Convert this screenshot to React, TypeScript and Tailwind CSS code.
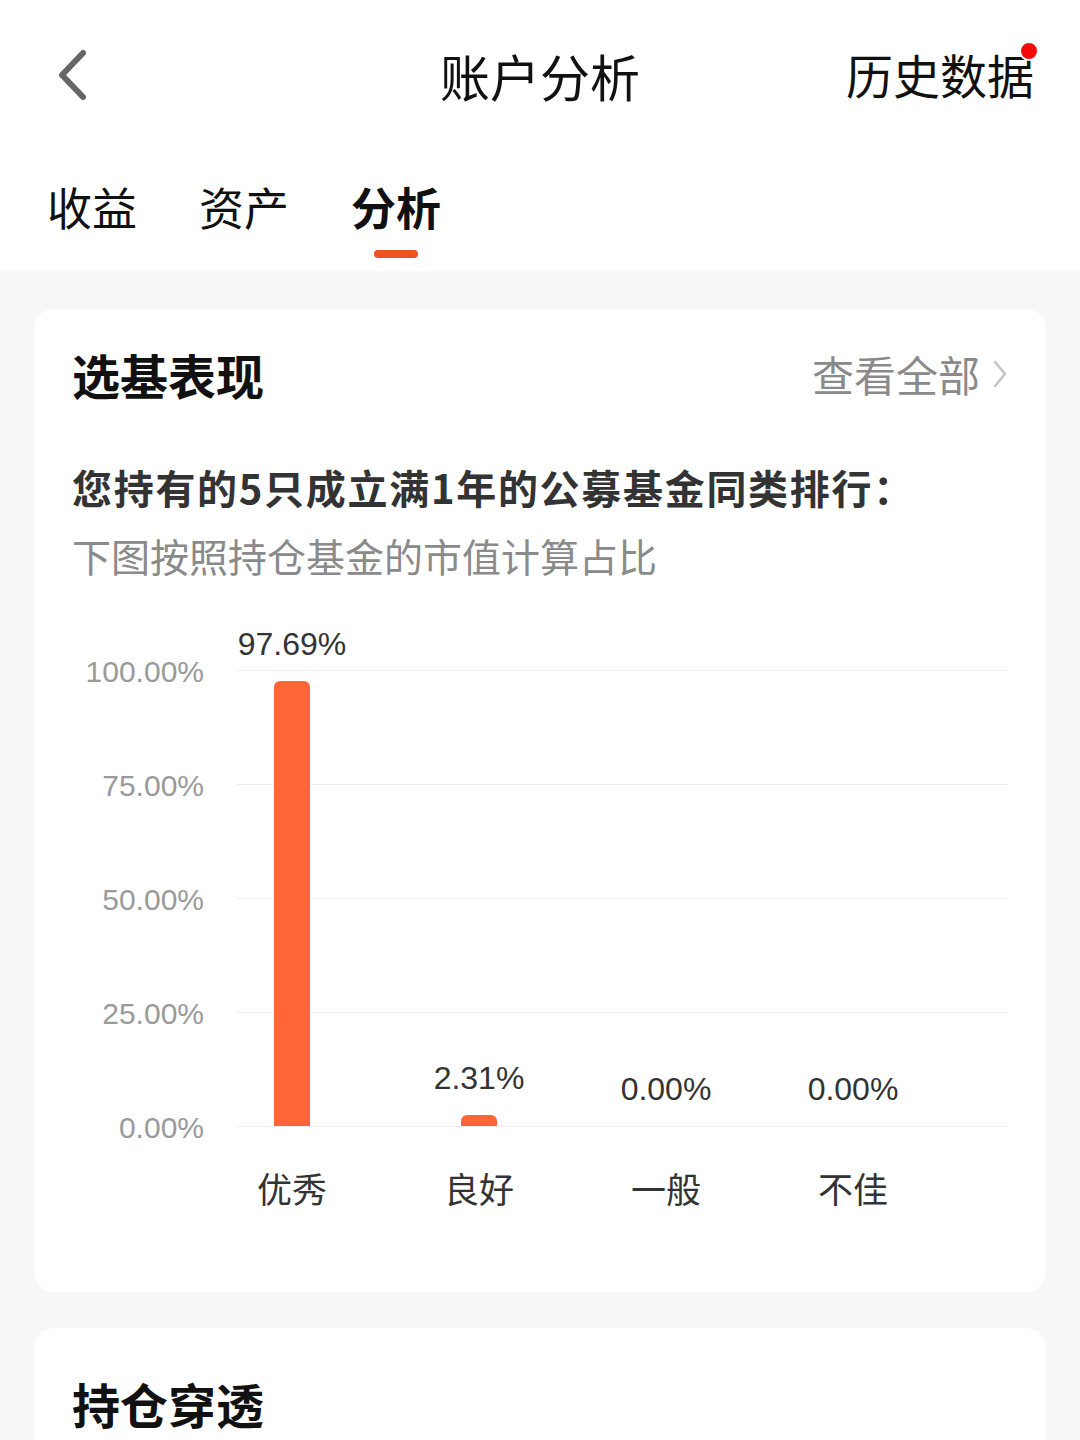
import React from "react";

const CJK = "font-['Noto_Sans_CJK_SC',sans-serif]";
const NUM = "font-['Liberation_Sans','Noto_Sans_CJK_SC',sans-serif]";

const TICKS = ["100.00%", "75.00%", "50.00%", "25.00%", "0.00%"];
const CHART_H = 456;

const bars = [
  { label: "优秀", value: 97.69, center: 220 },
  { label: "良好", value: 2.31, center: 407 },
  { label: "一般", value: 0, center: 594 },
  { label: "不佳", value: 0, center: 781 },
];

function BackIcon() {
  return (
    <svg width="32" height="52" viewBox="0 0 32 52" fill="none">
      <path d="M27 4 L6 26 L27 48" stroke="#666" strokeWidth="6" strokeLinecap="round" strokeLinejoin="round" />
    </svg>
  );
}

function Chevron() {
  return (
    <svg width="16" height="30" viewBox="0 0 16 30" fill="none">
      <path d="M3 3 L13 15 L3 27" stroke="#c4c4c4" strokeWidth="2.5" strokeLinecap="round" strokeLinejoin="round" />
    </svg>
  );
}

function Chart() {
  return (
    <div className="relative mt-[89px]" style={{ height: CHART_H }}>
      {TICKS.map((t, i) => {
        const top = (CHART_H / 4) * i;
        return (
          <React.Fragment key={t}>
            <div className="absolute left-[164px] right-0 h-px bg-[#efefef]" style={{ top }} />
            <div
              className={`absolute left-0 w-[132px] text-right text-[30px] leading-[36px] text-[#9a9a9a] ${NUM}`}
              style={{ top: top - 16 }}
            >
              {t}
            </div>
          </React.Fragment>
        );
      })}
      {bars.map((b) => {
        const h = Math.round((b.value / 100) * CHART_H);
        return (
          <React.Fragment key={b.label}>
            {h > 0 && (
              <div
                className="absolute bottom-0 w-[36px] rounded-t-[6px] bg-[#ff6536]"
                style={{ left: b.center - 18, height: h }}
              />
            )}
            <div
              className={`absolute w-[160px] text-center text-[32px] leading-[40px] text-[#333] ${NUM}`}
              style={{ left: b.center - 80, top: CHART_H - h - 37 - 20 }}
            >
              {b.value.toFixed(2)}%
            </div>
          </React.Fragment>
        );
      })}
    </div>
  );
}

export default function App() {
  return (
    <div className={`w-[1080px] min-h-[1440px] bg-[#f7f7f7] ${CJK}`}>
      <div className="bg-white">
        <div className="relative flex h-[150px] items-center px-[56px]">
          <BackIcon />
          <div className="absolute left-0 right-0 top-[44px] text-center text-[50px] leading-[62px] text-[#111]">
            账户分析
          </div>
          <div className="relative ml-auto mr-[-10px] pb-[2px] text-[47px] leading-[60px] text-[#111]">
            历史数据
            <span className="absolute right-[-5px] top-[-3px] h-[20px] w-[20px] rounded-full border-2 border-white bg-[#f50a0a]" />
          </div>
        </div>
        <div className="flex gap-[62px] px-[47px] pt-[27px]">
          {["收益", "资产", "分析"].map((t, i) => (
            <div key={t} className="flex flex-col items-center">
              <div className={`text-[45px] leading-[60px] text-[#111] ${i === 2 ? "font-bold" : ""}`}>{t}</div>
              <div className={`mt-[13px] h-[8px] w-[44px] rounded-full ${i === 2 ? "bg-[#f05323]" : "bg-transparent"}`} />
            </div>
          ))}
        </div>
        <div className="h-[13px]" />
      </div>

      <div className="mx-[34px] mt-[38px] rounded-[20px] bg-white px-[38px] pt-[35px] pb-[81px]">
        <div className="flex h-[60px] items-center">
          <div className="text-[48px] font-bold leading-[60px] text-[#111]">选基表现</div>
          <div className="ml-auto flex items-center gap-[12px] text-[42px] leading-[60px] text-[#8a8a8a]">
            查看全部
            <Chevron />
          </div>
        </div>
        <div className="mt-[57px] text-[40px] font-bold leading-[52px] tracking-[1.7px] text-[#333]">
          您持有的5只成立满1年的公募基金同类排行：
        </div>
        <div className="mt-[16px] text-[39px] leading-[52px] text-[#8a8a8a]">下图按照持仓基金的市值计算占比</div>
        <Chart />
        <div className="relative mt-[39px] h-[46px]">
          {bars.map((b) => (
            <div
              key={b.label}
              className="absolute w-[120px] text-center text-[35px] leading-[46px] text-[#333]"
              style={{ left: b.center - 60 }}
            >
              {b.label}
            </div>
          ))}
        </div>
      </div>

      <div className="mx-[34px] mt-[36px] h-[200px] rounded-t-[20px] bg-white px-[38px] pt-[45px]">
        <div className="text-[48px] font-bold leading-[60px] text-[#111]">持仓穿透</div>
      </div>
    </div>
  );
}
